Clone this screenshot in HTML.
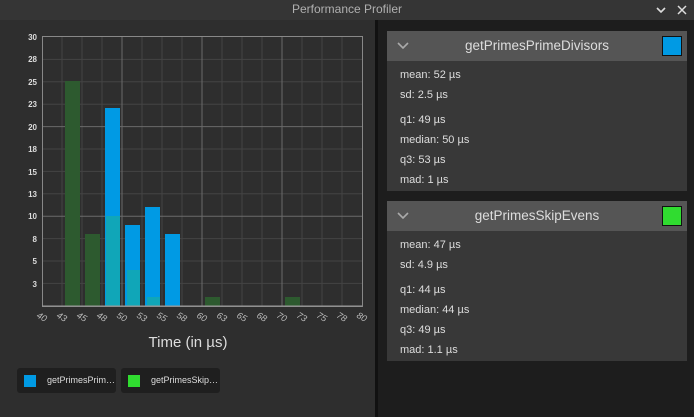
<!DOCTYPE html>
<html><head><style>
body{margin:0;width:694px;height:417px;background:#1d1d1d;font-family:"Liberation Sans",sans-serif;overflow:hidden;position:relative}
.tb{position:absolute;left:0;top:0;width:694px;height:20px;background:#353535;color:#b0b0b0;font-size:12px;line-height:18px;text-align:center}
.left{position:absolute;left:0;top:20px;width:375px;height:397px;background:#2e2e2e}
.div{position:absolute;left:375px;top:20px;width:3px;height:397px;background:#111}
.card{position:absolute;left:387px;width:300px;height:160px;background:#383838}
.hd{height:30px;background:#555;color:#ddd;font-size:13.5px;line-height:30px;text-align:center;position:relative}
.sw{position:absolute;left:275px;top:5px;width:18px;height:18px;border:1px solid #111}
.ln{position:absolute;left:13px;font-size:11px;color:#ddd}
.lg{position:absolute;top:368px;width:99px;height:25px;background:#1f1f1f;border-radius:3px;font-size:9px;color:#ddd}
.lg i{position:absolute;left:7px;top:7px;width:12px;height:12px}
.lg span{position:absolute;left:30px;top:7px}
</style></head><body>
<div class="tb">Performance Profiler
<svg style="position:absolute;left:656px;top:5px" width="10" height="10"><path d="M1 3 L5 7 L9 3" stroke="#ddd" stroke-width="1.6" fill="none"/></svg>
<svg style="position:absolute;left:677px;top:5px" width="10" height="10"><path d="M1 1 L9 9 M9 1 L1 9" stroke="#ddd" stroke-width="1.5"/></svg>
</div>
<div class="left"></div>
<div class="div"></div>
<svg style="position:absolute;left:0;top:0" width="376" height="417" font-family="Liberation Sans" >
<g stroke="#444" stroke-width="1">
<line x1="62" y1="37" x2="62" y2="306"/><line x1="82" y1="37" x2="82" y2="306"/><line x1="102" y1="37" x2="102" y2="306"/><line x1="142" y1="37" x2="142" y2="306"/><line x1="162" y1="37" x2="162" y2="306"/><line x1="182" y1="37" x2="182" y2="306"/><line x1="222" y1="37" x2="222" y2="306"/><line x1="242" y1="37" x2="242" y2="306"/><line x1="262" y1="37" x2="262" y2="306"/><line x1="302" y1="37" x2="302" y2="306"/><line x1="322" y1="37" x2="322" y2="306"/><line x1="342" y1="37" x2="342" y2="306"/>
<line x1="42" y1="59.4" x2="362" y2="59.4"/><line x1="42" y1="81.8" x2="362" y2="81.8"/><line x1="42" y1="104.2" x2="362" y2="104.2"/><line x1="42" y1="149" x2="362" y2="149"/><line x1="42" y1="171.4" x2="362" y2="171.4"/><line x1="42" y1="193.8" x2="362" y2="193.8"/><line x1="42" y1="238.6" x2="362" y2="238.6"/><line x1="42" y1="261" x2="362" y2="261"/><line x1="42" y1="283.4" x2="362" y2="283.4"/>
</g>
<g stroke="#6a6a6a"><line x1="122" y1="37" x2="122" y2="306"/><line x1="202" y1="37" x2="202" y2="306"/><line x1="282" y1="37" x2="282" y2="306"/><line x1="42" y1="126.6" x2="362" y2="126.6"/><line x1="42" y1="216.2" x2="362" y2="216.2"/></g>
<rect x="42.5" y="36.5" width="320" height="270" fill="none" stroke="#888"/>
<g fill="#2d5a2f"><rect x="65" y="81" width="15" height="225"/><rect x="85" y="234" width="15" height="72"/><rect x="205" y="297" width="15" height="9"/><rect x="285" y="297" width="15" height="9"/></g>
<g fill="#009ae4"><rect x="105" y="108" width="15" height="198"/><rect x="125" y="225" width="15" height="81"/><rect x="145" y="207" width="15" height="99"/><rect x="165" y="234" width="15" height="72"/></g>
<g fill="#10a6b8"><rect x="106" y="216" width="14" height="90"/><rect x="127" y="270" width="13" height="36"/><rect x="147" y="297" width="13" height="9"/></g>
<line x1="42" y1="306" x2="362" y2="306" stroke="#999"/>
<g fill="#ddd" font-size="8" font-weight="bold" text-anchor="end">
<text x="37" y="40">30</text><text x="37" y="62">28</text><text x="37" y="85">25</text><text x="37" y="107">23</text><text x="37" y="130">20</text><text x="37" y="152">18</text><text x="37" y="175">15</text><text x="37" y="197">13</text><text x="37" y="219">10</text><text x="37" y="242">8</text><text x="37" y="264">5</text><text x="37" y="287">3</text>
</g>
<g fill="#bbb" font-size="9" font-style="italic">
<text transform="translate(36,317) rotate(30)">40</text><text transform="translate(56,317) rotate(30)">43</text><text transform="translate(76,317) rotate(30)">45</text><text transform="translate(96,317) rotate(30)">48</text><text transform="translate(116,317) rotate(30)">50</text><text transform="translate(136,317) rotate(30)">53</text><text transform="translate(156,317) rotate(30)">55</text><text transform="translate(176,317) rotate(30)">58</text><text transform="translate(196,317) rotate(30)">60</text><text transform="translate(216,317) rotate(30)">63</text><text transform="translate(236,317) rotate(30)">65</text><text transform="translate(256,317) rotate(30)">68</text><text transform="translate(276,317) rotate(30)">70</text><text transform="translate(296,317) rotate(30)">73</text><text transform="translate(316,317) rotate(30)">75</text><text transform="translate(336,317) rotate(30)">78</text><text transform="translate(356,317) rotate(30)">80</text>
</g>
<text x="188" y="347" fill="#ddd" font-size="15" text-anchor="middle">Time (in µs)</text>
</svg>
<div class="lg" style="left:17px"><i style="background:#009ae4"></i><span>getPrimesPrim…</span></div>
<div class="lg" style="left:121px"><i style="background:#30dc30"></i><span>getPrimesSkip…</span></div>

<div class="card" style="top:31px"><div class="hd"><svg style="position:absolute;left:10px;top:11px" width="12" height="8"><path d="M1 1 L6 6 L11 1" stroke="#aaa" stroke-width="1.6" fill="none"/></svg>getPrimesPrimeDivisors<div class="sw" style="background:#009ae4"></div></div>
<div class="ln" style="top:38px">mean: 52 µs</div><div class="ln" style="top:58px">sd: 2.5 µs</div><div class="ln" style="top:83px">q1: 49 µs</div><div class="ln" style="top:103px">median: 50 µs</div><div class="ln" style="top:123px">q3: 53 µs</div><div class="ln" style="top:143px">mad: 1 µs</div></div>
<div class="card" style="top:201px"><div class="hd"><svg style="position:absolute;left:10px;top:11px" width="12" height="8"><path d="M1 1 L6 6 L11 1" stroke="#aaa" stroke-width="1.6" fill="none"/></svg>getPrimesSkipEvens<div class="sw" style="background:#30dc30"></div></div>
<div class="ln" style="top:38px">mean: 47 µs</div><div class="ln" style="top:58px">sd: 4.9 µs</div><div class="ln" style="top:83px">q1: 44 µs</div><div class="ln" style="top:103px">median: 44 µs</div><div class="ln" style="top:123px">q3: 49 µs</div><div class="ln" style="top:143px">mad: 1.1 µs</div></div>
</body></html>
